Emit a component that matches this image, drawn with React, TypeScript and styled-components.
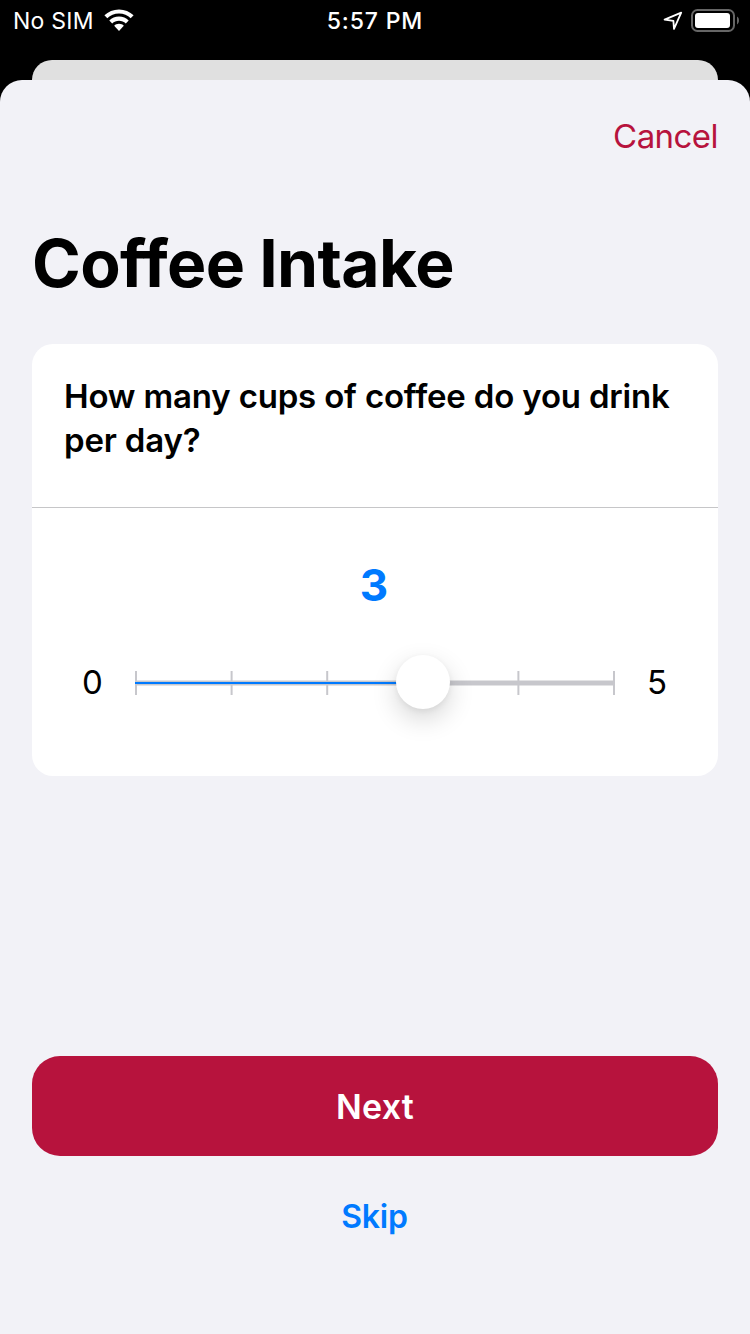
import React from "react";
import styled, { createGlobalStyle } from "styled-components";

const GlobalStyle = createGlobalStyle`
  * { box-sizing: border-box; }
  body { margin: 0; background: #000; font-family: Inter, "Liberation Sans", sans-serif; }
  button { font: inherit; border: 0; padding: 0; background: none; cursor: pointer; }
`;

const Screen = styled.div`
  width: 750px;
  height: 1334px;
  display: flex;
  flex-direction: column;
  background: #000;
  overflow: hidden;
`;

const StatusBar = styled.header`
  height: 60px;
  flex: none;
  display: grid;
  grid-template-columns: 1fr auto 1fr;
  padding: 0 11px 20px 13px;
  align-items: center;
  color: #fff;
  font-size: 23px;
`;

const StatusGroup = styled.div<{ $end?: boolean }>`
  display: flex;
  align-items: center;
  justify-content: ${(p) => (p.$end ? "flex-end" : "flex-start")};
  gap: ${(p) => (p.$end ? "8px" : "10px")};
`;

const Carrier = styled.span`
  line-height: 38px;
  padding-top: 2px;
  letter-spacing: 0.25px;
`;

const Clock = styled.span`
  line-height: 38px;
  padding: 2px 2px 0 0;
  font-weight: 500;
  letter-spacing: 0.85px;
`;

const BackCard = styled.div`
  flex: none;
  height: 20px;
  margin: 0 32px;
  border-radius: 20px 20px 0 0;
  background: #e0e0e0;
`;

const Sheet = styled.main`
  flex: 1;
  display: flex;
  flex-direction: column;
  padding: 34px 32px 0;
  border-radius: 22px 22px 0 0;
  background: #f2f2f7;
`;

const CancelButton = styled.button`
  align-self: flex-end;
  height: 44px;
  line-height: 44px;
  font-size: 33px;
  letter-spacing: -0.55px;
  color: #b7133d;
`;

const Title = styled.h1`
  margin: 65px 0 0;
  height: 80px;
  line-height: 80px;
  font-size: 66px;
  font-weight: 700;
  letter-spacing: -0.67px;
  color: #000;
`;

const Card = styled.section`
  height: 432px;
  margin-top: 41px;
  border-radius: 21px;
  background: #fff;
`;

const Question = styled.h2`
  margin: 0;
  height: 164px;
  padding: 30px 32px 0;
  border-bottom: 1px solid #c6c6c8;
  font-size: 33px;
  line-height: 44px;
  font-weight: 600;
  letter-spacing: -0.18px;
`;

const Answer = styled.div`
  display: flex;
  flex-direction: column;
  align-items: center;
  padding-top: 47px;
`;

const Value = styled.output`
  height: 60px;
  padding-right: 2px;
  line-height: 60px;
  font-size: 44px;
  font-weight: 700;
  color: #007aff;
`;

const SliderRow = styled.div`
  width: 100%;
  margin-top: 40px;
  padding: 0 51px 0 50px;
  display: flex;
  align-items: flex-start;
`;

const Bound = styled.span<{ $end?: boolean }>`
  flex: 1;
  text-align: ${(p) => (p.$end ? "right" : "left")};
  line-height: 54px;
  font-size: 33px;
`;

const Slider = styled.div`
  position: relative;
  flex: none;
  width: 480px;
  height: 56px;
`;

const Thumb = styled.div`
  position: absolute;
  top: 0;
  left: 261px;
  width: 54px;
  height: 54px;
  border-radius: 50%;
  background: #fff;
  box-shadow: 0 10px 26px rgba(0, 0, 0, 0.16), 0 2px 6px rgba(0, 0, 0, 0.06);
`;

const Actions = styled.footer`
  margin-top: 280px;
  display: flex;
  flex-direction: column;
  align-items: center;
`;

const NextButton = styled.button`
  width: 100%;
  height: 100px;
  border-radius: 28px;
  background: #b7133d;
  color: #fff;
  font-size: 34px;
  font-weight: 600;
  letter-spacing: 0.2px;
`;

const SkipButton = styled.button`
  margin-top: 39px;
  padding-right: 1px;
  height: 44px;
  line-height: 44px;
  font-size: 32px;
  font-weight: 600;
  letter-spacing: -0.2px;
  color: #007aff;
`;

const WifiIcon = () => (
  <svg width="30" height="23" viewBox="0 0 30 23" fill="#fff">
    <path d="M15 0.4C20.7 0.4 25.800 2.600 29.600 6.300L26.700 9.300C23.700 6.300 19.600 4.500 15 4.500S6.300 6.300 3.300 9.300L0.400 6.300C4.200 2.600 9.300 0.400 15 0.400Z" />
    <path d="M15 7.600C18.800 7.600 22.200 9.100 24.700 11.500L21.800 14.500C20 12.700 17.600 11.700 15 11.700S10 12.700 8.200 14.500L5.300 11.500C7.800 9.100 11.200 7.600 15 7.600Z" />
    <path d="M15 14.800C16.900 14.800 18.600 15.500 19.800 16.700L15 22L10.200 16.700C11.400 15.500 13.100 14.800 15 14.800Z" />
  </svg>
);

const LocationIcon = () => (
  <svg width="20" height="20" viewBox="0 0 20 20" fill="none">
    <path d="M18.200 2.600L11 18.900L10.400 10.900L1.600 9.700Z" stroke="#fff" strokeWidth="1.800" strokeLinejoin="round" />
  </svg>
);

const BatteryIcon = () => (
  <svg width="48" height="23" viewBox="0 0 48 23">
    <rect x="1" y="1" width="42" height="21" rx="5.500" fill="none" stroke="#666" strokeWidth="2" />
    <rect x="4" y="4" width="35" height="15" rx="3" fill="#fff" />
    <path d="M46 7.500C47.300 8.300 48 9.700 48 11.500S47.300 14.700 46 15.500Z" fill="#666" />
  </svg>
);

const TickScale = () => (
  <svg width="480" height="56" viewBox="0 0 480 56">
    <g fill="#c7c7cc">
      <rect x="0" y="25.500" width="480" height="5" />
      {[0, 1, 2, 3, 4, 5].map((n) => (
        <rect key={n} x={n * 95.6} y="16" width="2" height="24" />
      ))}
    </g>
    <rect x="0" y="27" width="288" height="2" fill="#007aff" />
  </svg>
);

export default function App() {
  return (
    <>
      <GlobalStyle />
      <Screen>
        <StatusBar>
          <StatusGroup>
            <Carrier>No SIM</Carrier>
            <WifiIcon />
          </StatusGroup>
          <Clock>5:57 PM</Clock>
          <StatusGroup $end>
            <LocationIcon />
            <BatteryIcon />
          </StatusGroup>
        </StatusBar>
        <BackCard />
        <Sheet>
          <CancelButton>Cancel</CancelButton>
          <Title>Coffee Intake</Title>
          <Card>
            <Question>How many cups of coffee do you drink per day?</Question>
            <Answer>
              <Value>3</Value>
              <SliderRow>
                <Bound>0</Bound>
                <Slider>
                  <TickScale />
                  <Thumb />
                </Slider>
                <Bound $end>5</Bound>
              </SliderRow>
            </Answer>
          </Card>
          <Actions>
            <NextButton>Next</NextButton>
            <SkipButton>Skip</SkipButton>
          </Actions>
        </Sheet>
      </Screen>
    </>
  );
}
